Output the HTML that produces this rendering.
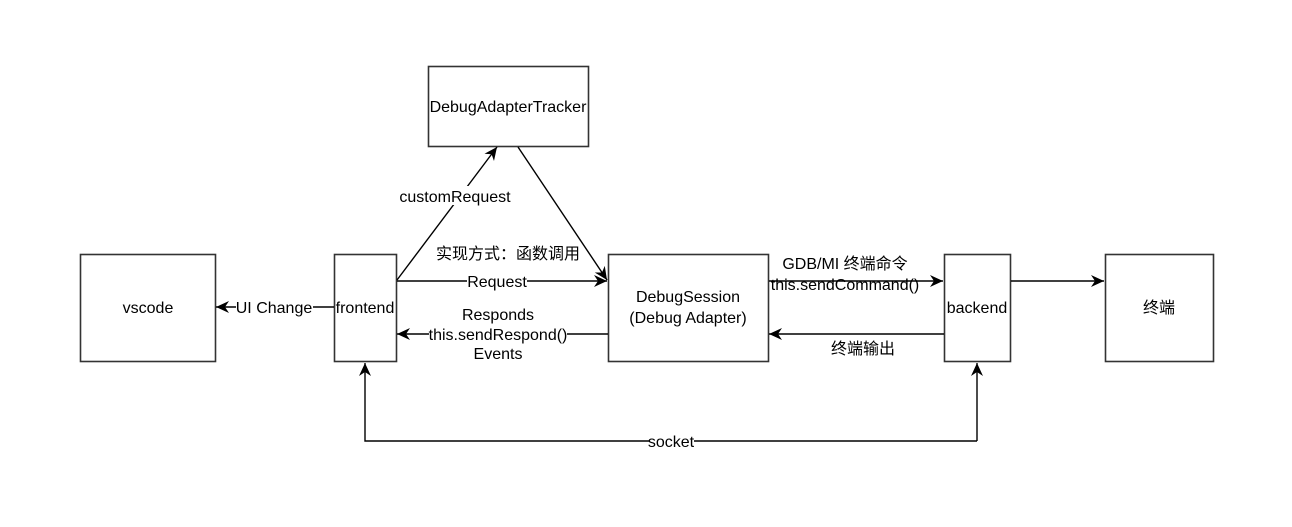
<!DOCTYPE html>
<html><head><meta charset="utf-8"><style>
html,body{margin:0;padding:0;background:#fff;}
svg{display:block;}
text{font-family:"Liberation Sans","Noto Sans CJK SC",sans-serif;font-size:16px;fill:#000;}
</style></head><body>
<svg width="1292" height="527" viewBox="0 0 1292 527" xmlns="http://www.w3.org/2000/svg">
<defs>
<marker id="a" markerWidth="14" markerHeight="14" refX="13" refY="6" orient="auto" markerUnits="userSpaceOnUse">
<path d="M0,0 L13,6 L0,12 L4,6 Z" fill="#000"/>
</marker>
</defs>
<g fill="#fff" stroke="#333" stroke-width="1.6">
<rect x="80.5" y="254.5" width="135" height="107"/>
<rect x="334.5" y="254.5" width="62" height="107"/>
<rect x="428.5" y="66.5" width="160" height="80"/>
<rect x="608.5" y="254.5" width="160" height="107"/>
<rect x="944.5" y="254.5" width="66" height="107"/>
<rect x="1105.5" y="254.5" width="108" height="107"/>
</g>
<g stroke="#000" stroke-width="1.4" fill="none">
<line x1="334" y1="307" x2="216" y2="307" marker-end="url(#a)"/>
<line x1="397" y1="280" x2="497" y2="147" marker-end="url(#a)"/>
<line x1="518" y1="147" x2="607" y2="280" marker-end="url(#a)"/>
<line x1="397" y1="281" x2="607" y2="281" marker-end="url(#a)"/>
<line x1="608" y1="334" x2="397" y2="334" marker-end="url(#a)"/>
<line x1="769" y1="281" x2="943" y2="281" marker-end="url(#a)"/>
<line x1="944" y1="334" x2="769" y2="334" marker-end="url(#a)"/>
<line x1="1011" y1="281" x2="1104" y2="281" marker-end="url(#a)"/>
<polyline points="977,441 365,441 365,363" marker-end="url(#a)"/>
<line x1="977" y1="441" x2="977" y2="363" marker-end="url(#a)"/>
</g>
<g fill="#fff">
<rect x="236" y="298" width="77" height="18"/>
<rect x="399" y="186" width="112" height="19"/>
<rect x="467" y="272" width="60" height="18"/>
<rect x="429" y="325" width="138" height="18"/>
<rect x="649" y="432" width="45" height="18"/>
</g>
<g text-anchor="middle">
<text x="148" y="313">vscode</text>
<text x="365" y="313">frontend</text>
<text x="508" y="112">DebugAdapterTracker</text>
<text x="688" y="302">DebugSession</text>
<text x="688" y="323">(Debug Adapter)</text>
<text x="977" y="313">backend</text>
<text x="1159" y="313">终端</text>
<text x="274" y="313">UI Change</text>
<text x="455" y="202">customRequest</text>
<text x="508" y="259">实现方式：函数调用</text>
<text x="497" y="287">Request</text>
<text x="498" y="320">Responds</text>
<text x="498" y="340">this.sendRespond()</text>
<text x="498" y="359">Events</text>
<text x="845" y="269">GDB/MI 终端命令</text>
<text x="845" y="290">this.sendCommand()</text>
<text x="863" y="354">终端输出</text>
<text x="671" y="447">socket</text>
</g>
</svg>
</body></html>
